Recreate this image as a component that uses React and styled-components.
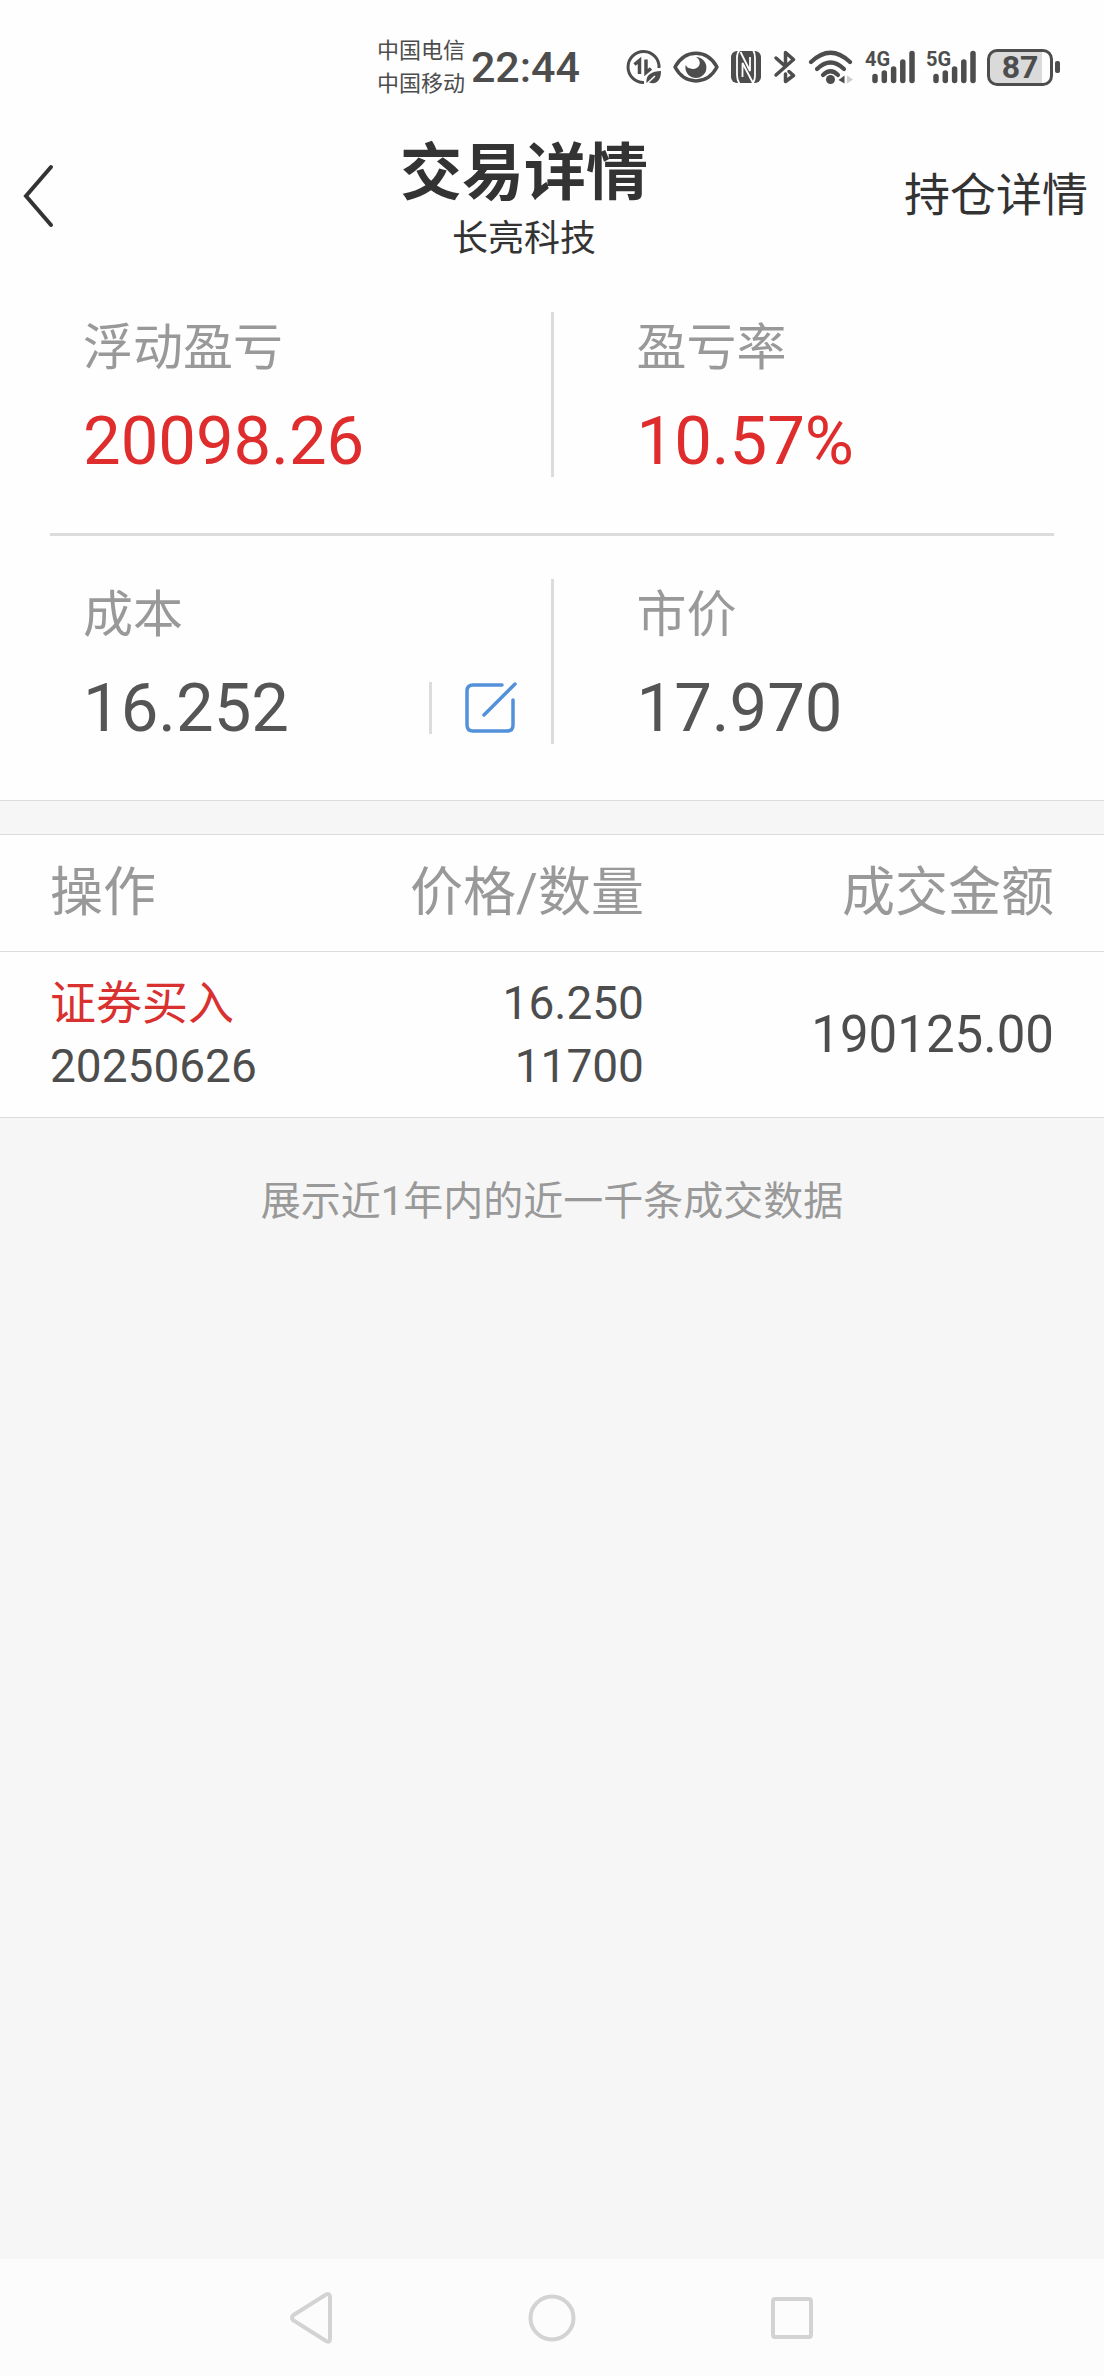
import styled, { createGlobalStyle } from "styled-components";

const trades = [
  {
    id: 1,
    action: "证券买入",
    date: "20250626",
    price: "16.250",
    quantity: "11700",
    amount: "190125.00",
  },
];

export default function App() {
  return (
    <>
      <GlobalStyle />
      <Page>
        <StatusBar />
        <Header>
          <BackButton aria-label="返回">
            <svg width="32" height="64" viewBox="0 0 32 64" fill="none">
              <path d="M29 3 L4 32 L29 61" stroke="#333" strokeWidth="4" strokeLinecap="round" />
            </svg>
          </BackButton>
          <Titles>
            <h1>交易详情</h1>
            <p>长亮科技</p>
          </Titles>
          <HeaderLink href="#position">持仓详情</HeaderLink>
        </Header>
        <Summary>
          <SummaryRow>
            <Metric label="浮动盈亏" value="20098.26" color="#df2d2d" />
            <Divider />
            <Metric label="盈亏率" value="10.57%" color="#df2d2d" />
          </SummaryRow>
          <Line />
          <SummaryRow>
            <Metric label="成本" value="16.252" color="#555">
              <EditButton aria-label="修改成本">
                <EditIcon />
              </EditButton>
            </Metric>
            <Divider />
            <Metric label="市价" value="17.970" color="#555" />
          </SummaryRow>
        </Summary>
        <TradeTable>
          <thead>
            <tr>
              <HeadCell width="33.33%">操作</HeadCell>
              <HeadCell width="25%" align="right">价格/数量</HeadCell>
              <HeadCell align="right">成交金额</HeadCell>
            </tr>
          </thead>
          <tbody>
            {trades.map((t) => (
              <tr key={t.id}>
                <Cell>
                  <Action>{t.action}</Action>
                  <div>{t.date}</div>
                </Cell>
                <Cell align="right">
                  <div>{t.price}</div>
                  <div>{t.quantity}</div>
                </Cell>
                <AmountCell align="right">{t.amount}</AmountCell>
              </tr>
            ))}
          </tbody>
        </TradeTable>
        <Note>展示近1年内的近一千条成交数据</Note>
        <NavBar>
          <NavButton aria-label="后退">
            <svg width="48" height="56" viewBox="0 0 48 56">
              <path d="M5.500 25 L38 4.500 Q42 3 42 7 V49 Q42 53 38 51 L5.500 30.500 Q2.500 28 5.500 25 Z" />
            </svg>
          </NavButton>
          <NavButton aria-label="主页">
            <svg width="48" height="48" viewBox="0 0 48 48">
              <circle cx="24" cy="24" r="21.500" />
            </svg>
          </NavButton>
          <NavButton aria-label="最近任务">
            <svg width="48" height="48" viewBox="0 0 48 48">
              <rect x="5" y="5" width="38" height="38" rx="2" />
            </svg>
          </NavButton>
        </NavBar>
      </Page>
    </>
  );
}

function Metric({ label, value, color, children }) {
  return (
    <MetricBox>
      <MetricLabel>{label}</MetricLabel>
      <MetricValue color={color}>
        <span>{value}</span>
        {children}
      </MetricValue>
    </MetricBox>
  );
}

function EditIcon() {
  return (
    <svg width="52" height="52" viewBox="0 0 52 52" fill="none" stroke="#5391db" strokeWidth="3.500" strokeLinecap="round">
      <path d="M37 3 H8 Q2 3 2 9 V43 Q2 49 8 49 H42 Q48 49 48 43 V18" />
      <path d="M19 33 L50 2" />
    </svg>
  );
}

function Signal({ type }) {
  return (
    <svg width="50" height="44" viewBox="0 -4 50 44">
      <text x="0" y="17" fontSize="20" fontWeight="700" fill="#4d4d4d">{type}</text>
      <g stroke="#4d4d4d" strokeWidth="5.500" strokeLinecap="round">
        <path d="M10 27.500 V31.500 M19.300 24 V31.500 M28.600 20 V31.500 M37.800 13 V31.500 M47 4.500 V31.500" />
      </g>
    </svg>
  );
}

function StatusBar() {
  return (
    <StatusRow>
      <Carriers>
        <div>中国电信</div>
        <div>中国移动</div>
      </Carriers>
      <Clock>22:44</Clock>
      <StatusIcons>
        <svg width="36" height="36" viewBox="0 0 36 36" fill="none" stroke="#4d4d4d" strokeWidth="3">
          <path d="M18 33.500 A15.500 15.500 0 1 1 33 19" />
          <path d="M8.500 15.500 L13.500 11.500 V25 M20 10.500 V23.500 L25 19.500" strokeWidth="3.500" />
          <path d="M20.500 34.500 C19.500 25 26 22.500 35 22 C35 31 31 36 23 33.500 Z" fill="#4d4d4d" stroke="none" />
          <path d="M20 35.500 L29 27" stroke="#fff" strokeWidth="1.500" />
        </svg>
        <svg width="46" height="36" viewBox="0 0 46 36">
          <path d="M2 18 C12 -0.500 34 -0.500 44 18 C34 36.500 12 36.500 2 18 Z" fill="none" stroke="#4d4d4d" strokeWidth="3.500" strokeLinejoin="round" />
          <path d="M23 8 A10.500 10.500 0 1 1 12.700 16 Q14.500 19.500 18 19.500 A6 6 0 0 0 23 8 Z" fill="#4d4d4d" />
        </svg>
        <svg width="32" height="36" viewBox="0 0 32 36">
          <rect x="1" y="2" width="30" height="32" rx="6" fill="#4d4d4d" />
          <path d="M9.500 35 Q7 31 7 26 V9 Q7 4 9.500 1 M12.500 28 V14 L23 34 M10.500 3 L20 22 V8 M23 1 Q25 4 25 9 V27 Q25 31 23 34" fill="none" stroke="#fff" strokeWidth="1.800" />
        </svg>
        <svg width="24" height="36" viewBox="0 0 24 36" fill="none" stroke="#4d4d4d" strokeWidth="3.500" strokeLinecap="round" strokeLinejoin="round">
          <path d="M3 9 L12.500 17.500 V3.500 L20.500 10.500 L3 26" />
          <path d="M12.500 25 V32.500 L20.500 26.500 L16 22.500" />
        </svg>
        <svg width="46" height="36" viewBox="0 0 46 36" fill="none" stroke="#4d4d4d" strokeWidth="4.200" strokeLinecap="round">
          <path d="M3 13 Q22.500 -5.500 42 13" />
          <path d="M9 20 Q22.500 7 36 20" />
          <path d="M15 26 Q22.500 18.500 30 26" />
          <circle cx="22.500" cy="30.500" r="4.500" fill="#4d4d4d" stroke="none" />
          <path d="M36.500 26.500 V34.500 L30.500 31 Z" fill="#4d4d4d" stroke="none" />
          <path d="M39 26.500 V34.500 L45 30.500 Z" fill="#ccc" stroke="none" />
        </svg>
        <Signal type="4G" />
        <Signal type="5G" />
        <Battery>
          <BatteryBody>87</BatteryBody>
          <BatteryTip />
        </Battery>
      </StatusIcons>
    </StatusRow>
  );
}

const GlobalStyle = createGlobalStyle`
  * {
    box-sizing: border-box;
  }
  body {
    margin: 0;
    background: #f6f6f6;
    font-family: Roboto, "Noto Sans CJK SC", sans-serif;
    color: #333;
  }
  h1, p {
    margin: 0;
  }
  button {
    border: none;
    padding: 0;
    background: none;
    cursor: pointer;
  }
  svg {
    display: block;
    flex-shrink: 0;
  }
`;
const Page = styled.div`
  min-height: 100vh;
  display: flex;
  flex-direction: column;
`;
const StatusRow = styled.div`
  background: #fefefe;
  height: 134px;
  padding-right: 44px;
  display: flex;
  align-items: center;
  justify-content: flex-end;
  color: #4d4d4d;
`;
const Carriers = styled.div`
  font-size: 22px;
  line-height: 33px;
`;
const Clock = styled.div`
  margin: 0 46px 0 6px;
  font-size: 43px;
  font-weight: 500;
`;
const StatusIcons = styled.div`
  display: flex;
  align-items: center;
  gap: 11px;
`;
const Battery = styled.div`
  display: flex;
  align-items: center;
  gap: 2px;
`;
const BatteryBody = styled.div`
  width: 66px;
  height: 37px;
  border: 3px solid #4d4d4d;
  border-radius: 10px;
  background: linear-gradient(to right, #dadada 87%, #fefefe 87%);
  font-size: 32px;
  line-height: 31px;
  font-weight: 700;
  text-align: center;
`;
const BatteryTip = styled.div`
  width: 5px;
  height: 12px;
  border-radius: 2px;
  background: #4d4d4d;
`;
const Header = styled.header`
  background: #fefefe;
  padding: 0 16px 12px 22px;
  display: grid;
  grid-template-columns: 124px 1fr 186px;
  align-items: center;
`;
const BackButton = styled.button`
  justify-self: start;
`;
const Titles = styled.div`
  text-align: center;
  h1 {
    font-size: 62px;
    line-height: 80px;
    margin-bottom: 7px;
  }
  p {
    font-size: 36px;
    line-height: 36px;
  }
`;
const HeaderLink = styled.a`
  justify-self: end;
  color: #333;
  font-size: 46px;
  line-height: 63px;
  text-decoration: none;
`;
const Summary = styled.section`
  background: #fefefe;
  border-bottom: 1px solid #dcdcdc;
`;
const SummaryRow = styled.div`
  padding: 43px 0 56px;
  display: grid;
  grid-template-columns: 1fr 3px 1fr;
`;
const Divider = styled.div`
  background: #dcdcdc;
`;
const Line = styled.div`
  height: 3px;
  margin: 0 50px;
  background: #dcdcdc;
`;
const MetricBox = styled.div`
  padding: 0 34px 0 83px;
  display: flex;
  flex-direction: column;
  gap: 21px;
`;
const MetricLabel = styled.div`
  color: #999;
  font-size: 50px;
  line-height: 72px;
`;
const MetricValue = styled.div`
  color: ${(props) => props.color};
  font-size: 67px;
  line-height: 72px;
  display: flex;
  align-items: center;
  justify-content: space-between;
`;
const EditButton = styled.button`
  && {
    border-left: 3px solid #dcdcdc;
    padding-left: 33px;
  }
`;
const TradeTable = styled.table`
  width: 100%;
  margin-top: 33px;
  background: #fefefe;
  border-top: 1px solid #dcdcdc;
  border-spacing: 0;
  table-layout: fixed;
  th, td {
    padding: 0;
    border-bottom: 1px solid #dcdcdc;
    text-align: left;
  }
  th:first-child, td:first-child {
    padding-left: 50px;
  }
  th:last-child, td:last-child {
    padding-right: 50px;
  }
`;
const HeadCell = styled.th`
  && {
    width: ${(props) => props.width};
    height: 117px;
    color: #999;
    font-size: 53px;
    line-height: 72px;
    font-weight: 400;
    text-align: ${(props) => props.align};
  }
`;
const Cell = styled.td`
  && {
    height: 166px;
    color: #4d4d4d;
    font-size: 46px;
    line-height: 63px;
    text-align: ${(props) => props.align};
  }
`;
const AmountCell = styled(Cell)`
  && {
    font-size: 51px;
  }
`;
const Action = styled.div`
  color: #d93030;
`;
const Note = styled.p`
  margin-top: 52px;
  color: #999;
  font-size: 40px;
  line-height: 64px;
  text-align: center;
`;
const NavBar = styled.nav`
  margin-top: auto;
  height: 117px;
  background: #fcfcfc;
  display: flex;
  align-items: center;
  justify-content: center;
  gap: 192px;
`;
const NavButton = styled.button`
  svg {
    fill: none;
    stroke: #d3d3d3;
    stroke-width: 4px;
  }
`;
